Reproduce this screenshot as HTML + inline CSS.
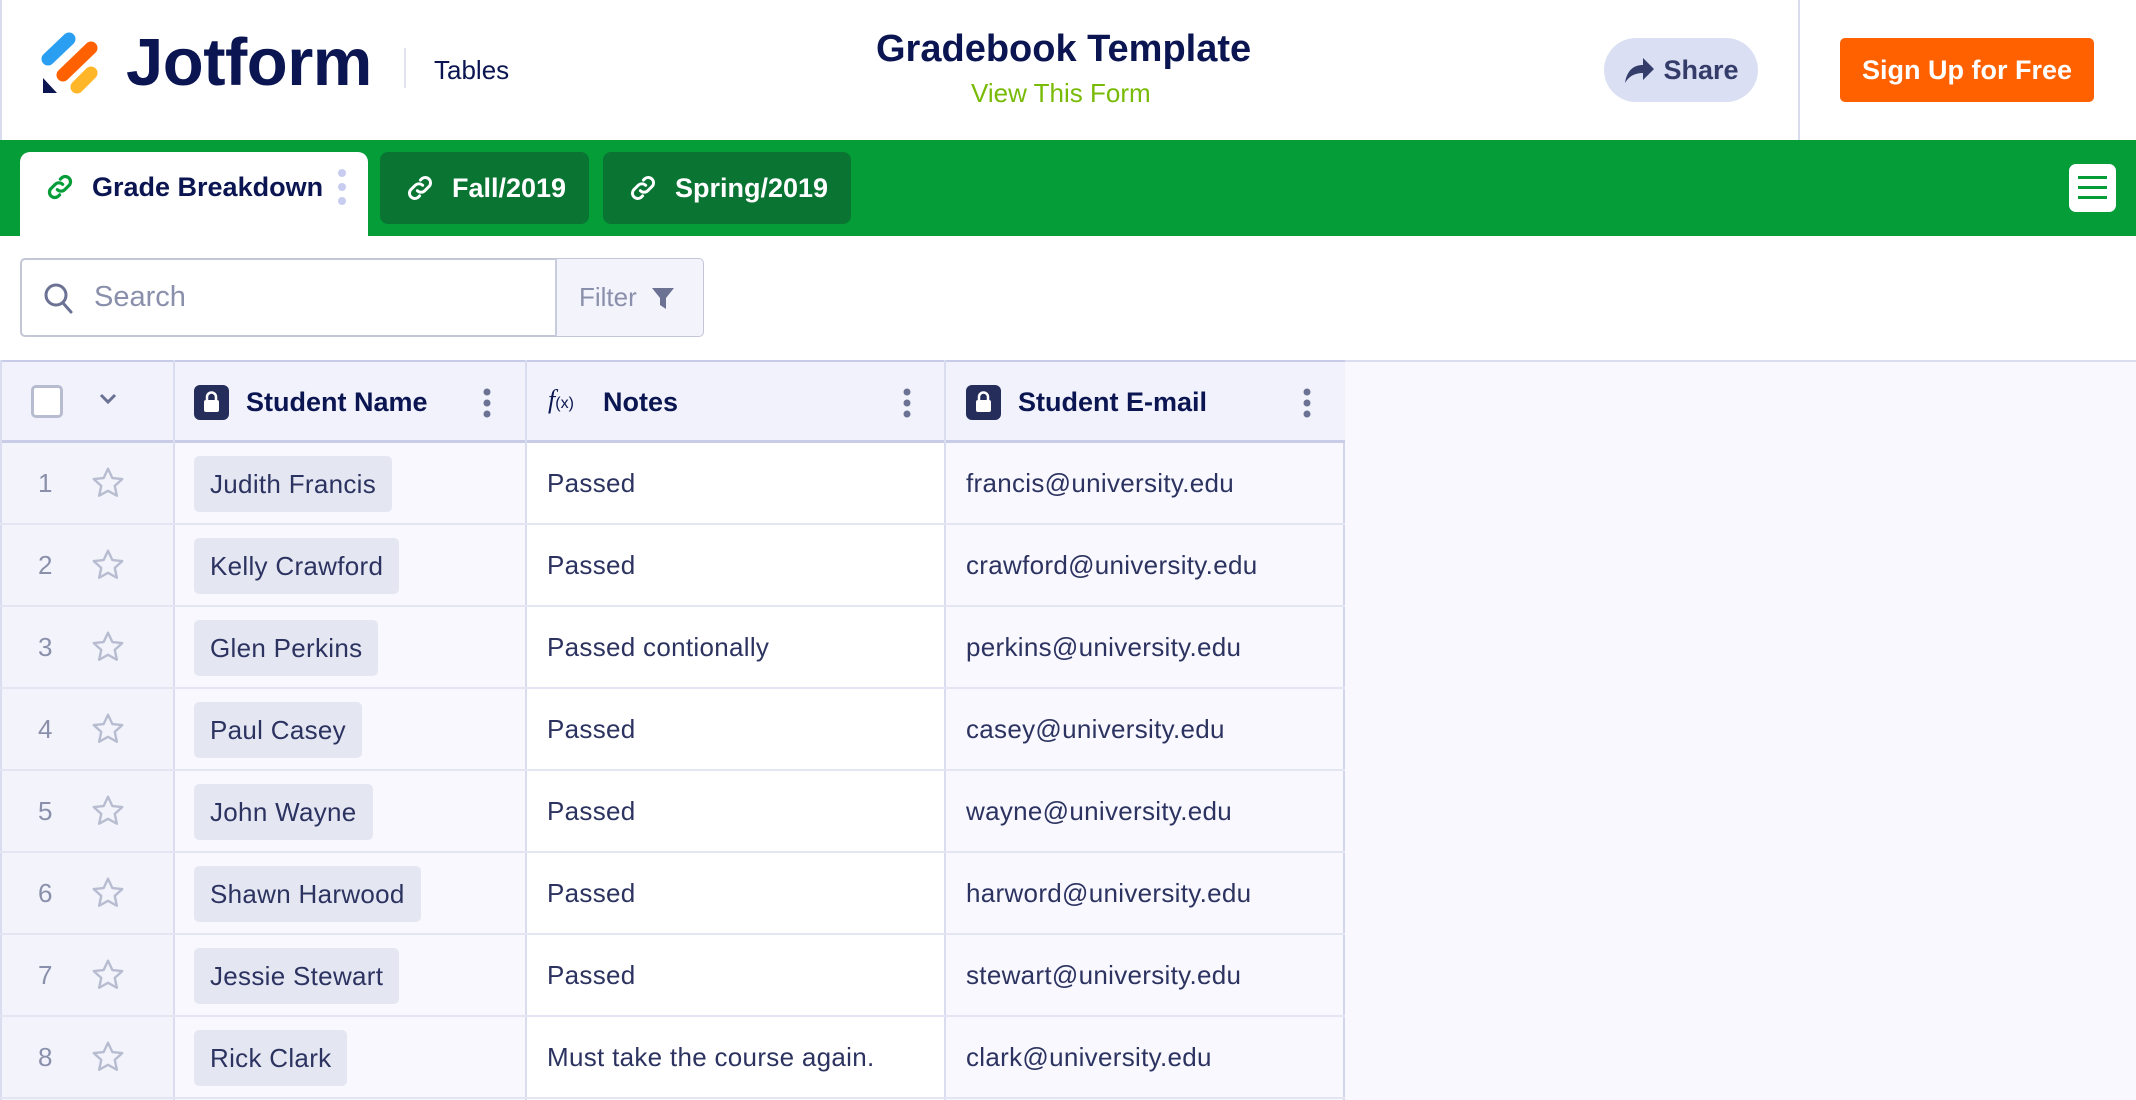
<!DOCTYPE html>
<html><head><meta charset="utf-8"><style>
*{box-sizing:border-box;margin:0;padding:0}
body{width:2136px;height:1100px;overflow:hidden;background:#fff;font-family:"Liberation Sans",sans-serif;color:#0a1551;position:relative}
.abs{position:absolute}
.hdr{left:0;top:0;width:2136px;height:140px;background:#fff;border-left:2px solid #d8dcee}
.green{left:0;top:140px;width:2136px;height:96px;background:#049d38}
.tab{top:152px;height:72px;border-radius:8px;display:flex;align-items:center;font-size:27px;font-weight:bold;color:#fff;background:#0a7533}
.tab svg{margin:0 16px 0 24px}
.row{position:absolute;left:0;width:1345px;height:82px;border-bottom:2px solid #e3e5f3}
.cell{position:absolute;top:0;height:80px;display:flex;align-items:center;font-size:26px;color:#2c3360}
</style></head><body>
<div class="abs hdr"></div>
<svg class="abs" style="left:38px;top:30px" width="64" height="68" viewBox="38 30 64 68">
<line x1="48" y1="59" x2="69" y2="39" stroke="#2a9ff2" stroke-width="13" stroke-linecap="round"/>
<line x1="63" y1="75" x2="91" y2="48" stroke="#ff6100" stroke-width="13" stroke-linecap="round"/>
<line x1="77" y1="87" x2="91" y2="73" stroke="#ffb629" stroke-width="13" stroke-linecap="round"/>
<polygon points="43,78 43,93 57,93" fill="#0a1551"/>
</svg>
<div class="abs" style="left:126px;top:24px;font-size:67px;font-weight:bold;letter-spacing:-0.5px;color:#0a1551">Jotform</div>
<div class="abs" style="left:404px;top:48px;width:2px;height:40px;background:#e0e3ef"></div>
<div class="abs" style="left:434px;top:55px;font-size:26px;color:#0a1551">Tables</div>
<div class="abs" style="left:876px;top:28px;font-size:38px;font-weight:bold;color:#0a1551">Gradebook Template</div>
<div class="abs" style="left:971px;top:78px;font-size:26px;color:#78bb07">View This Form</div>
<div class="abs" style="left:1604px;top:38px;width:154px;height:64px;border-radius:32px;background:#dbdff3;display:flex;align-items:center;justify-content:center;font-size:27px;font-weight:bold;color:#343c6a">
<svg width="32" height="28" viewBox="0 0 32 28" style="margin-right:8px"><path d="M2 27 C4 14 11 9 20 9 V2 L31 13 L20 24 V17 C12 17 6 20 2 27Z" fill="#343c6a"/></svg>Share</div>
<div class="abs" style="left:1798px;top:0;width:2px;height:140px;background:#d8dcee"></div>
<div class="abs" style="left:1840px;top:38px;width:254px;height:64px;border-radius:5px;background:#ff6100;color:#fff;font-size:27px;font-weight:bold;display:flex;align-items:center;justify-content:center">Sign Up for Free</div>

<div class="abs green"></div>
<div class="abs" style="left:20px;top:152px;width:348px;height:84px;background:#fff;border-radius:10px 10px 0 0;display:flex;align-items:center;font-size:27px;font-weight:bold;color:#0a1551;padding-bottom:14px">
<svg width="32" height="32" viewBox="0 0 24 24" style="margin:0 16px 0 24px" fill="none" stroke="#049d38" stroke-width="2.4" stroke-linecap="round"><path d="M10 14a4 4 0 0 0 5.6 0l3.5-3.5a4 4 0 0 0-5.6-5.6l-1.2 1.2"/><path d="M14 10a4 4 0 0 0-5.6 0l-3.5 3.5a4 4 0 0 0 5.6 5.6l1.2-1.2"/></svg>Grade Breakdown
<svg width="10" height="40" style="margin-left:14px"><circle cx="5" cy="6" r="4" fill="#c8cdf0"/><circle cx="5" cy="20" r="4" fill="#c8cdf0"/><circle cx="5" cy="34" r="4" fill="#c8cdf0"/></svg></div>
<div class="abs tab" style="left:380px;width:209px"><svg width="32" height="32" viewBox="0 0 24 24" fill="none" stroke="#fff" stroke-width="2.2" stroke-linecap="round"><path d="M10 14a4 4 0 0 0 5.6 0l3.5-3.5a4 4 0 0 0-5.6-5.6l-1.2 1.2"/><path d="M14 10a4 4 0 0 0-5.6 0l-3.5 3.5a4 4 0 0 0 5.6 5.6l1.2-1.2"/></svg>Fall/2019</div>
<div class="abs tab" style="left:603px;width:248px"><svg width="32" height="32" viewBox="0 0 24 24" fill="none" stroke="#fff" stroke-width="2.2" stroke-linecap="round"><path d="M10 14a4 4 0 0 0 5.6 0l3.5-3.5a4 4 0 0 0-5.6-5.6l-1.2 1.2"/><path d="M14 10a4 4 0 0 0-5.6 0l-3.5 3.5a4 4 0 0 0 5.6 5.6l1.2-1.2"/></svg>Spring/2019</div>
<div class="abs" style="left:2069px;top:164px;width:47px;height:48px;background:#fff;border-radius:7px">
<div class="abs" style="left:9px;top:12px;width:29px;height:3px;background:#049d38"></div>
<div class="abs" style="left:9px;top:22px;width:29px;height:3px;background:#049d38"></div>
<div class="abs" style="left:9px;top:32px;width:29px;height:3px;background:#049d38"></div></div>

<div class="abs" style="left:20px;top:258px;width:684px;height:79px;border:2px solid #c3c6d6;border-radius:5px"></div>
<div class="abs" style="left:555px;top:259px;width:148px;height:77px;background:#f3f4fb;border-left:2px solid #c9ccdd;border-radius:0 4px 4px 0;display:flex;align-items:center;font-size:26px;color:#8a90ab;padding-left:22px">Filter
<svg width="24" height="24" viewBox="0 0 24 24" style="margin-left:14px"><path d="M1 2H23L15 12V23L9 19V12Z" fill="#6b7294"/></svg></div>
<svg class="abs" style="left:44px;top:283px" width="30" height="32" viewBox="0 0 30 32" fill="none" stroke="#6b7294" stroke-width="3"><circle cx="12" cy="12" r="10"/><line x1="19" y1="20" x2="27" y2="29" stroke-linecap="round"/></svg>
<div class="abs" style="left:94px;top:281px;font-size:29px;color:#8a90ab">Search</div>

<div class="abs" style="left:0;top:360px;width:2136px;height:740px;background:#f8f8fe;border-top:2px solid #dadcf0"></div>
<div class="abs" style="left:0;top:360px;width:1345px;height:740px;background:#f8f8fe;border-right:2px solid #d3d6ea"></div>
<div class="abs" style="left:0;top:360px;width:173px;height:740px;background:#f3f4fb"></div>
<div class="abs" style="left:525px;top:360px;width:420px;height:740px;background:#fff"></div>
<div class="abs" style="left:0;top:360px;width:1345px;height:83px;background:#f1f2fb;border-top:2px solid #c8cce6;border-bottom:3px solid #c8cce6"></div>
<div class="abs" style="left:173px;top:360px;width:2px;height:740px;background:#dadcf0"></div>
<div class="abs" style="left:525px;top:360px;width:2px;height:740px;background:#dadcf0"></div>
<div class="abs" style="left:944px;top:360px;width:2px;height:740px;background:#dadcf0"></div>
<div class="abs" style="left:0;top:360px;width:2px;height:740px;background:#dadcf0"></div>

<div class="abs" style="left:31px;top:385px;width:32px;height:33px;border:3px solid #b8bcd0;border-radius:5px;background:#fff"></div>
<svg class="abs" style="left:98px;top:392px" width="20" height="14"><path d="M3 3L10 10L17 3" fill="none" stroke="#6b7294" stroke-width="3"/></svg>
<div class="abs" style="left:194px;top:385px;width:35px;height:35px;border-radius:6px;background:#252d5b"></div>
<svg class="abs" style="left:202px;top:391px" width="19" height="22"><path d="M5 9V6a4.5 4.5 0 0 1 9 0v3" fill="none" stroke="#fff" stroke-width="2.5"/><rect x="2" y="9" width="15" height="12" rx="2" fill="#fff"/></svg>
<div class="abs" style="left:246px;top:387px;font-size:27px;font-weight:bold">Student Name</div>
<div class="abs" style="left:548px;top:385px;font-size:26px;font-style:italic;font-family:'Liberation Serif',serif">f<span style="font-size:16px;font-style:normal;font-family:'Liberation Sans'">(x)</span></div>
<div class="abs" style="left:603px;top:387px;font-size:27px;font-weight:bold">Notes</div>
<div class="abs" style="left:966px;top:385px;width:35px;height:35px;border-radius:6px;background:#252d5b"></div>
<svg class="abs" style="left:974px;top:391px" width="19" height="22"><path d="M5 9V6a4.5 4.5 0 0 1 9 0v3" fill="none" stroke="#fff" stroke-width="2.5"/><rect x="2" y="9" width="15" height="12" rx="2" fill="#fff"/></svg>
<div class="abs" style="left:1018px;top:387px;font-size:27px;font-weight:bold">Student E-mail</div>
<svg class="abs" style="left:482px;top:388px" width="10" height="30"><circle cx="5" cy="4" r="3.5" fill="#6b7294"/><circle cx="5" cy="15" r="3.5" fill="#6b7294"/><circle cx="5" cy="26" r="3.5" fill="#6b7294"/></svg>
<svg class="abs" style="left:902px;top:388px" width="10" height="30"><circle cx="5" cy="4" r="3.5" fill="#6b7294"/><circle cx="5" cy="15" r="3.5" fill="#6b7294"/><circle cx="5" cy="26" r="3.5" fill="#6b7294"/></svg>
<svg class="abs" style="left:1302px;top:388px" width="10" height="30"><circle cx="5" cy="4" r="3.5" fill="#6b7294"/><circle cx="5" cy="15" r="3.5" fill="#6b7294"/><circle cx="5" cy="26" r="3.5" fill="#6b7294"/></svg>

<div id="rows"></div>
<script>
var d=[["Judith Francis","Passed","francis@university.edu"],["Kelly Crawford","Passed","crawford@university.edu"],["Glen Perkins","Passed contionally","perkins@university.edu"],["Paul Casey","Passed","casey@university.edu"],["John Wayne","Passed","wayne@university.edu"],["Shawn Harwood","Passed","harword@university.edu"],["Jessie Stewart","Passed","stewart@university.edu"],["Rick Clark","Must take the course again.","clark@university.edu"]];
var h="";
d.forEach(function(r,i){var t=443+i*82;
h+='<div class="row" style="top:'+t+'px">'+
'<div class="cell" style="left:38px;color:#8a90ab">'+(i+1)+'</div>'+
'<svg style="position:absolute;left:90px;top:22px" width="36" height="36" viewBox="0 0 24 24"><path d="M12 2.5l2.9 6.2 6.6.7-5 4.5 1.4 6.6L12 17.2l-5.9 3.3 1.4-6.6-5-4.5 6.6-.7z" fill="none" stroke="#b8bcd0" stroke-width="1.6" stroke-linejoin="round"/></svg>'+
'<div class="cell" style="left:194px;top:13px;height:56px;padding:0 16px;background:#e4e7f2;border-radius:5px;letter-spacing:0.3px">'+r[0]+'</div>'+
'<div class="cell" style="left:547px;letter-spacing:0.3px">'+r[1]+'</div>'+
'<div class="cell" style="left:966px;letter-spacing:0.3px">'+r[2]+'</div></div>';});
document.getElementById("rows").innerHTML=h;
</script>
</body></html>
